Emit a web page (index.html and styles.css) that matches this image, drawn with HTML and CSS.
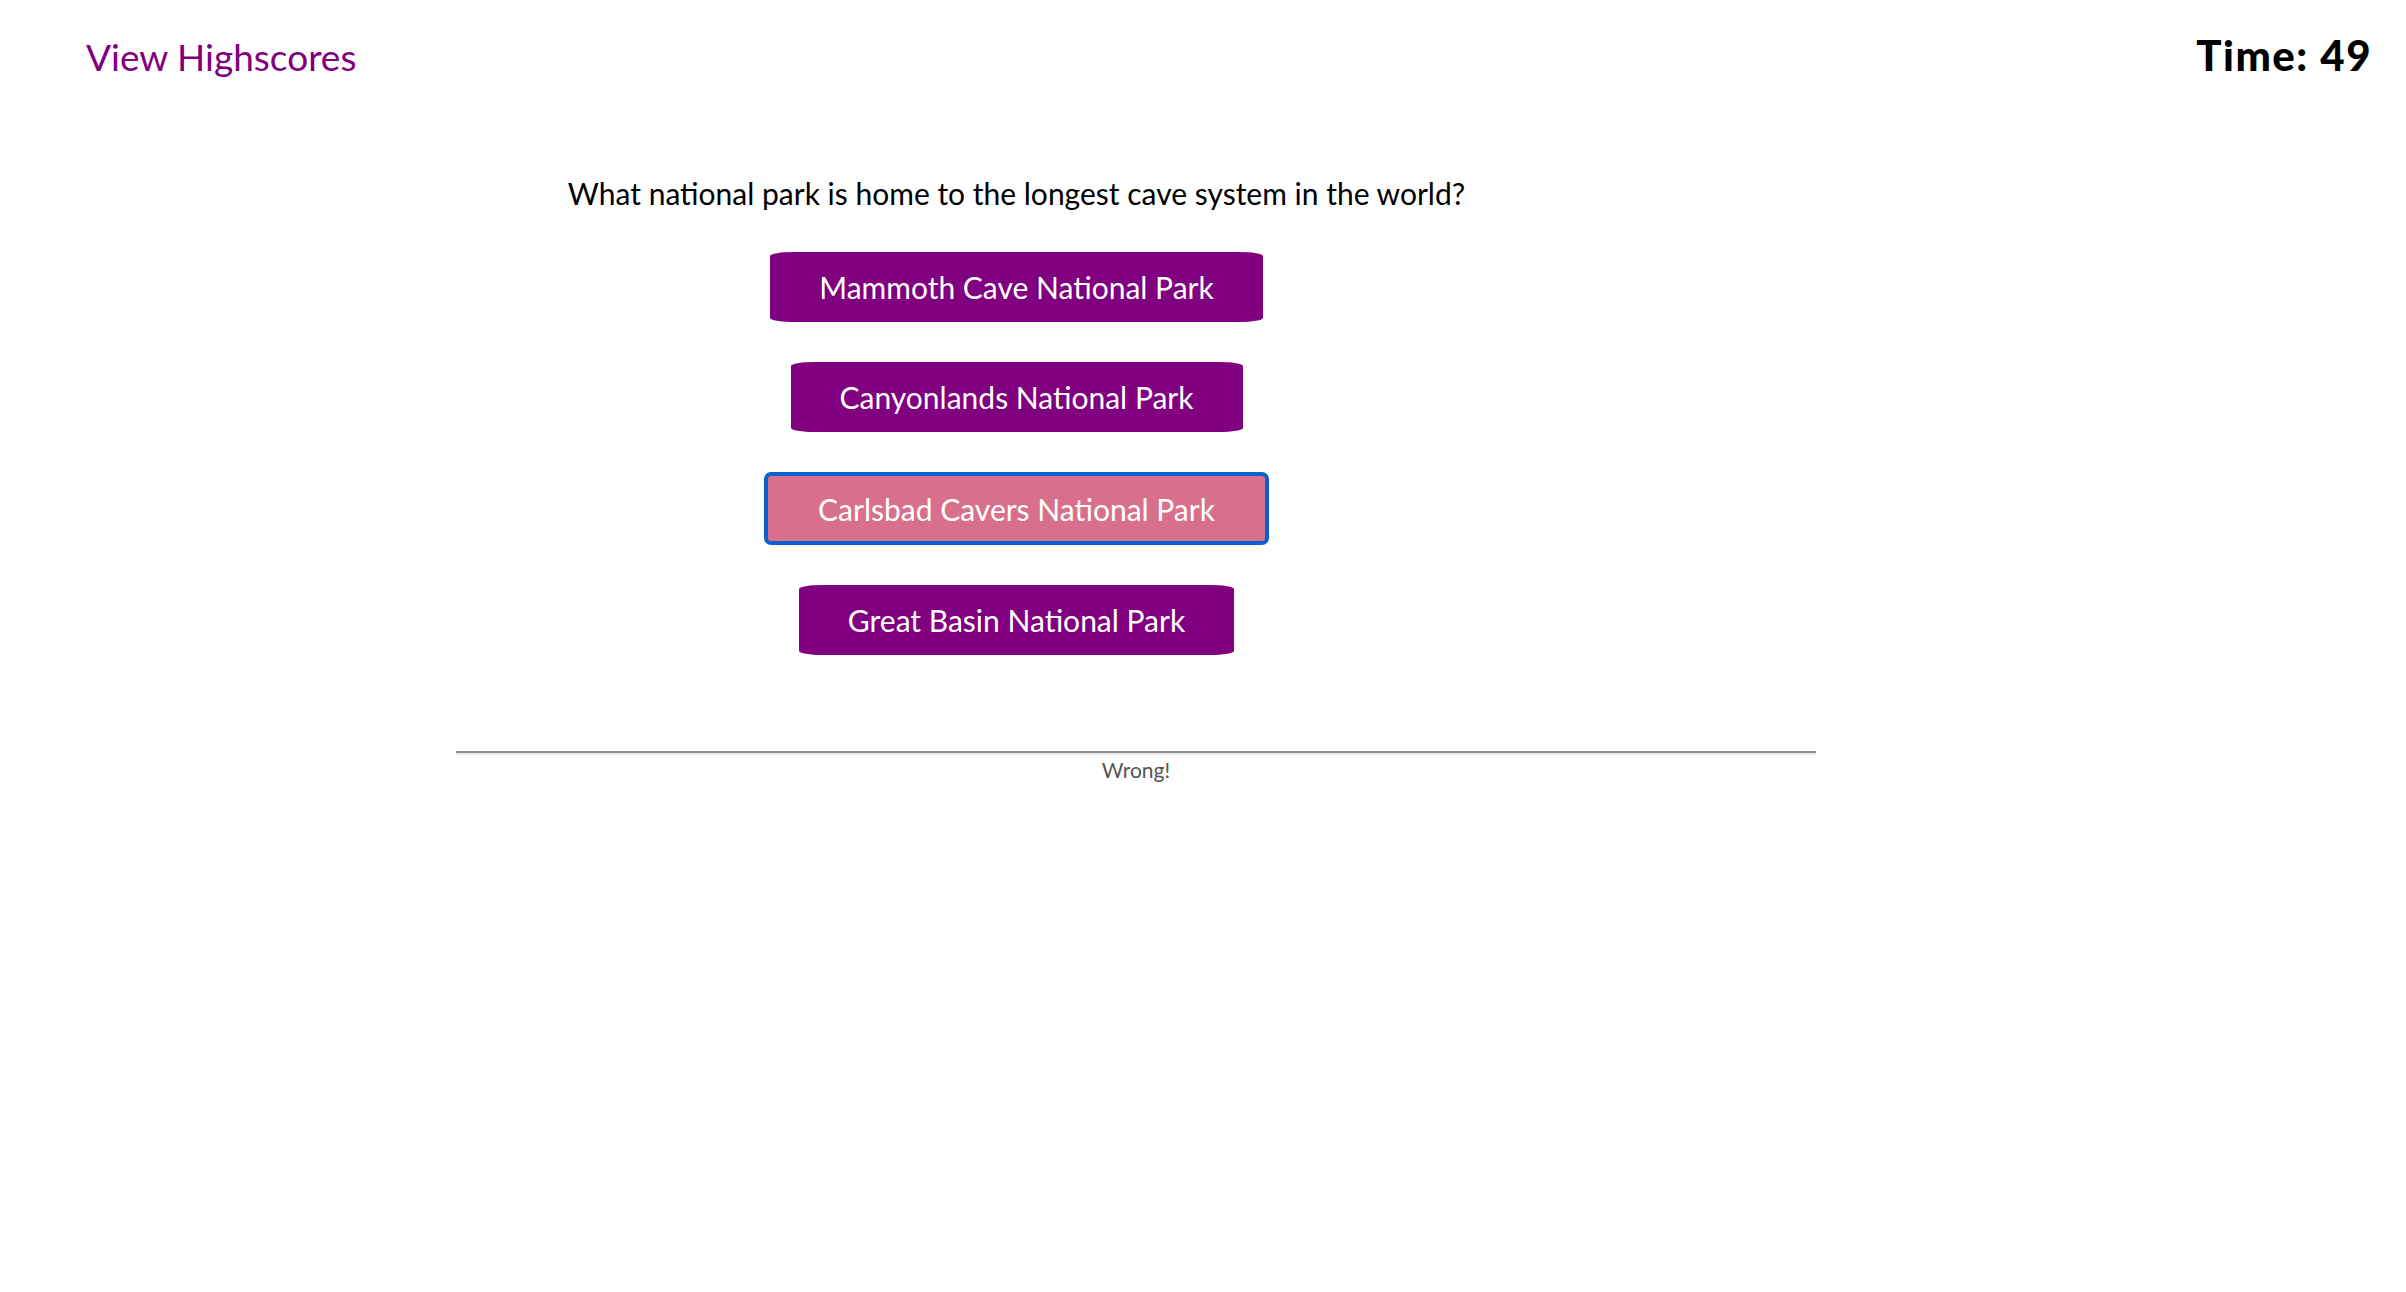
FILE: index.html
```html
<!DOCTYPE html>
<html lang="en">
<head>
<meta charset="utf-8">
<title>Code Quiz</title>
<link rel="stylesheet" href="styles.css">
</head>
<body>
<header class="top-bar">
  <a class="highscores-link" href="#">View Highscores</a>
  <div class="timer">Time: 49</div>
</header>
<main class="page">
  <section class="quiz">
    <h2 class="question">What national park is home to the longest cave system in the world?</h2>
    <div class="answers">
      <button class="answer">Mammoth Cave National Park</button>
      <button class="answer">Canyonlands National Park</button>
      <button class="answer answer-selected">Carlsbad Cavers National Park</button>
      <button class="answer">Great Basin National Park</button>
    </div>
  </section>
  <section class="feedback">
    <hr class="divider">
    <p class="result">Wrong!</p>
  </section>
</main>
</body>
</html>
```
FILE: styles.css
```css
html, body {
  margin: 0;
  padding: 0;
  background: #ffffff;
}

body {
  font-family: "Lato", "Open Sans", "Liberation Sans", sans-serif;
  color: #000000;
}

.top-bar {
  display: flex;
  justify-content: space-between;
  align-items: baseline;
  padding: 31px 34px 0 86px;
}

.highscores-link {
  color: #800080;
  text-decoration: none;
  font-size: 37px;
  line-height: 48px;
}

.timer {
  font-size: 42px;
  line-height: 48px;
  font-weight: 900;
  letter-spacing: 1.5px;
}

.page {
  display: flex;
  flex-direction: column;
}

.quiz {
  width: 891px;
  margin-left: 571px;
  display: flex;
  flex-direction: column;
  align-items: center;
}

.question {
  font-size: 30px;
  font-weight: 400;
  line-height: 36px;
  margin: 94px 0 0 0;
  white-space: nowrap;
}

.answers {
  display: flex;
  flex-direction: column;
  align-items: center;
  gap: 40px;
  margin-top: 41px;
}

.answer {
  height: 70px;
  padding: 0 49px;
  border: none;
  border-radius: 24px / 4px;
  background: #800080;
  color: #ffffff;
  font-family: "Lato", "Open Sans", "Liberation Sans", sans-serif;
  font-size: 30px;
  cursor: pointer;
}

.answer-selected {
  height: 73px;
  background: #d8708d;
  border: 4px solid #0a60cf;
  border-radius: 7px;
  padding: 0 50px;
}

.feedback {
  width: 1360px;
  margin-left: 456px;
  margin-top: 96px;
  text-align: center;
}

.divider {
  margin: 0;
  height: 0;
  border: none;
  border-top: 2px solid #8f8f8f;
  border-bottom: 2px solid #ececec;
}

.result {
  margin: 3px 0 0 0;
  font-size: 21px;
  line-height: 24px;
  color: #555555;
}
```
